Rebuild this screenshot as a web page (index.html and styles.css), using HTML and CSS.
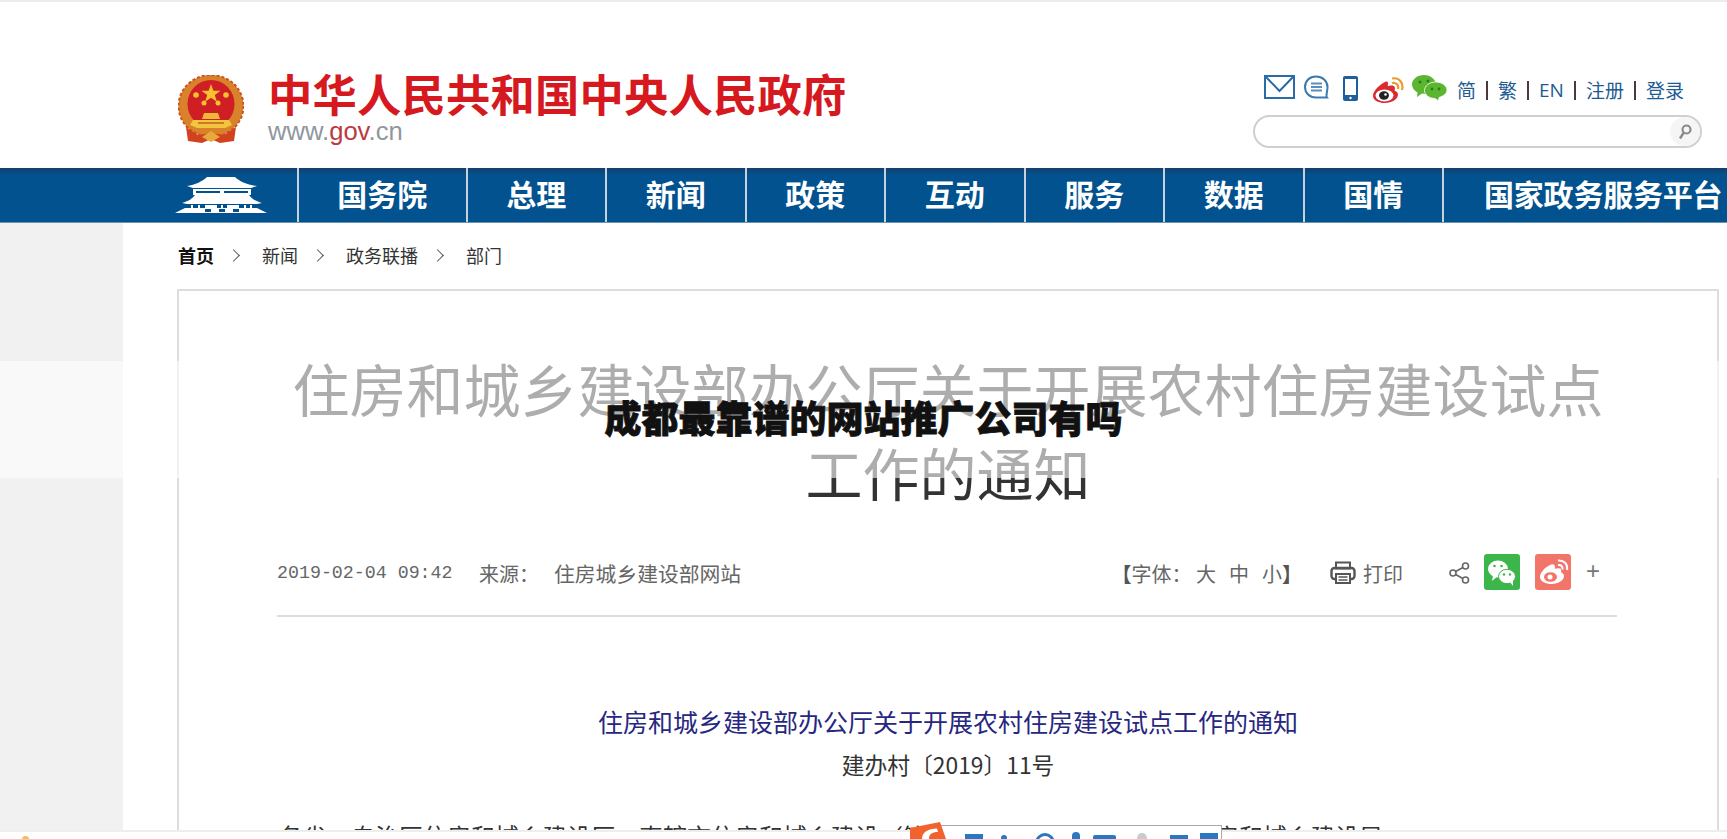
FILE: index.html
```html
<!DOCTYPE html>
<html lang="zh-CN">
<head>
    <meta charset="UTF-8">
    <meta name="viewport" content="width=device-width, initial-scale=1.0">
    <title>成都最靠谱的网站推广公司有吗</title>
    <link rel="stylesheet" href="styles.css">
</head>
<body>
	<div class="page">
		<header class="header">
			<svg class="emblem" viewBox="0 0 66 68">
				<ellipse cx="33" cy="31" rx="32.500" ry="31" fill="#d9822b"/>
				<ellipse cx="33" cy="31" rx="32.500" ry="31" fill="none" stroke="#c9541f" stroke-width="2" stroke-dasharray="3 2"/>
				<path d="M8 52 L20 60 L33 58 L46 60 L58 52 L56 66 L42 68 L33 64 L24 68 L10 66 Z" fill="#d2421f"/>
				<path d="M24 62 L33 56 L42 62 L33 67 Z" fill="#e9a93a"/>
				<ellipse cx="33" cy="29" rx="23.500" ry="24" fill="#cf1f25"/>
				<path d="M33 9 L35.400 15.800 L42.500 15.800 L36.800 20 L38.900 26.800 L33 22.700 L27.100 26.800 L29.200 20 L23.500 15.800 L30.600 15.800 Z" fill="#f5c12f"/>
				<circle cx="18" cy="20" r="2.800" fill="#f5c12f"/>
				<circle cx="48" cy="20" r="2.800" fill="#f5c12f"/>
				<circle cx="26" cy="28" r="2.500" fill="#f5c12f"/>
				<circle cx="40" cy="28" r="2.500" fill="#f5c12f"/>
				<path d="M26 38 H40 L42 44 H24 Z" fill="#eeb83a"/>
				<path d="M15 45 H51 L54 50 L47 53 H19 L12 50 Z" fill="#f2c53f"/>
				<rect x="20" y="47" width="26" height="2" fill="#cf7a23"/>
			</svg>
			<div class="brand">
				<div class="brand-name">中华人民共和国中央人民政府</div>
				<div class="brand-url">www.<span class="brand-url-red">gov</span>.cn</div>
			</div>
			<div class="tools">
				<div class="tool-row">
					<svg class="ico-mail" viewBox="0 0 31 24">
						<rect x="1" y="1" width="29" height="22" fill="none" stroke="#2a6da6" stroke-width="2"/>
						<path d="M2 2 L15.500 16 L29 2" fill="none" stroke="#2a6da6" stroke-width="2"/>
					</svg>
					<svg class="ico-chat" viewBox="0 0 25 24">
						<path d="M12 1.500 C5.500 1.500 1 6 1 12 C1 18 5.500 22.500 12 22.500 H23 C21.500 20.500 23.500 17 23.500 12 C23.500 6 18.500 1.500 12 1.500 Z" fill="none" stroke="#3a7bb0" stroke-width="2"/>
						<path d="M7 8.500 H18 M7 12 H18 M7 15.500 H18" stroke="#5a8fbb" stroke-width="1.800"/>
					</svg>
					<svg class="ico-phone" viewBox="0 0 15 25">
						<rect x="0" y="0" width="15" height="25" rx="2" fill="#1f5f9b"/>
						<rect x="2" y="3" width="11" height="16" fill="#fff"/>
						<circle cx="7.500" cy="22" r="1.200" fill="#fff"/>
					</svg>
					<svg class="ico-weibo" viewBox="0 0 32 26">
						<path d="M13 5 C7 8 1 14 1 19 C1 23.500 7 26 13 26 C20 26 26 22 26 17.500 C26 14.500 23 14 22.500 13.500 C24 10 22 7.500 17 9 C16 9.300 15.500 9 16 7 C16 4.500 15 4 13 5 Z" fill="#dc2a2f"/>
						<ellipse cx="12.500" cy="18.500" rx="9" ry="6" fill="#fff"/>
						<ellipse cx="12" cy="18.500" rx="5" ry="4.200" fill="#222"/>
						<circle cx="13.500" cy="17.500" r="1.300" fill="#fff"/>
						<path d="M20 6 C24 5 27 8 26 12 M20 1.500 C27 0 32 6 30 13" fill="none" stroke="#ee9a2e" stroke-width="2.200"/>
					</svg>
					<svg class="ico-wechat" viewBox="0 0 35 26">
						<path d="M12 0 C5.500 0 0 4.200 0 9.500 C0 13 2.500 15.800 5.500 17.500 L5 22 L10 18.500 C11 18.700 13 19 14 19 L24 8 C22.500 3.500 17.500 0 12 0 Z" fill="#5cb531"/>
						<path d="M23.500 7 C17.500 7 12.500 10.800 12.500 15.500 C12.500 20 17.500 23.500 23 23.500 L26.500 26 L27 22.500 C31.500 21 35 18.500 35 15 C35 10.500 29.500 7 23.500 7 Z" fill="#5cb531" stroke="#fff" stroke-width=".8"/>
						<circle cx="8" cy="7" r="1.500" fill="#2e7d14"/>
						<circle cx="16" cy="6" r="1.500" fill="#2e7d14"/>
						<circle cx="20" cy="14" r="1.400" fill="#2e7d14"/>
						<circle cx="27" cy="14" r="1.400" fill="#2e7d14"/>
					</svg>
					<div class="lang">
						<a>简</a><i></i><a>繁</a><i></i><a class="lang-en">EN</a><i></i><a>注册</a><i></i><a>登录</a>
					</div>
				</div>
				<div class="search">
					<div class="search-btn">
						<svg viewBox="0 0 14 16" class="ico-search">
							<circle cx="8.500" cy="5.500" r="4" fill="none" stroke="#8a8a8a" stroke-width="2.200"/>
							<path d="M5.500 9 L2 14.500" stroke="#8a8a8a" stroke-width="2.400"/>
						</svg>
					</div>
				</div>
			</div>
		</header>

		<nav class="nav">
			<div class="nav-home">
				<svg class="temple" viewBox="0 0 92 36">
					<path d="M12 9 C20 8 28 4 32 0 H60 C64 4 72 8 82 9 L76 11 H18 Z" fill="#fff"/>
					<path d="M18 12 H76 V18 H18 Z M21 14 V16 H45 V14 Z M49 14 V16 H73 V14 Z" fill="#fff" fill-rule="evenodd"/>
					<path d="M7 26 C14 24 18 21 20 18 H74 C76 21 80 24 87 26 L82 27 H12 Z" fill="#fff"/>
					<path d="M16 28 H18 V31 H16 Z M23 28 H25 V31 H23 Z M30 28 H42 V31 H30 Z M46 28 H48 V31 H46 Z M52 28 H64 V31 H52 Z M69 28 H71 V31 H69 Z M75 28 H77 V31 H75 Z" fill="#fff"/>
					<path d="M10 31 H82 L92 36 H0 Z" fill="#fff"/>
					<path d="M30 32 H36 V35 H30 Z M44 32 H50 V35 H44 Z M58 32 H64 V35 H58 Z" fill="#02528f"/>
				</svg>
			</div>
			<a class="nav-item nav-item-wide">国务院</a>
			<a class="nav-item">总理</a>
			<a class="nav-item">新闻</a>
			<a class="nav-item">政策</a>
			<a class="nav-item">互动</a>
			<a class="nav-item">服务</a>
			<a class="nav-item">数据</a>
			<a class="nav-item">国情</a>
			<a class="nav-item nav-item-last">国家政务服务平台</a>
		</nav>

		<div class="main">
			<div class="side-strip"></div>
			<div class="content">
				<div class="crumbs">
					<a class="crumb-home">首页</a>
					<span class="crumb-sep"></span>
					<a>新闻</a>
					<span class="crumb-sep"></span>
					<a>政务联播</a>
					<span class="crumb-sep"></span>
					<a>部门</a>
				</div>
				<article class="card">
					<h1 class="big-title">住房和城乡建设部办公厅关于开展农村住房建设试点<br>工作的通知</h1>
					<div class="meta">
						<span class="meta-date">2019-02-04 09:42</span>
						<span class="meta-from">来源：</span>
						<span class="meta-source">住房城乡建设部网站</span>
						<div class="meta-right">
							<span class="meta-font"><b>【</b>字体： 大<span class="meta-size">中</span><span class="meta-size">小</span><b>】</b></span>
							<svg class="ico-print" viewBox="0 0 26 24">
								<rect x="6" y="1.500" width="14" height="6" fill="none" stroke="#555" stroke-width="2"/>
								<rect x="1.500" y="7" width="23" height="11" rx="3" fill="none" stroke="#555" stroke-width="2.400"/>
								<rect x="6" y="13" width="14" height="9" fill="#fff" stroke="#555" stroke-width="2"/>
								<path d="M8.500 16 H17.500 M8.500 19 H17.500" stroke="#555" stroke-width="1.500"/>
							</svg>
							<span class="meta-print">打印</span>
							<svg class="ico-share" viewBox="0 0 21 22">
								<circle cx="4" cy="11" r="3" fill="none" stroke="#666" stroke-width="1.600"/>
								<circle cx="16.500" cy="4" r="3" fill="none" stroke="#666" stroke-width="1.600"/>
								<circle cx="16.500" cy="18" r="3" fill="none" stroke="#666" stroke-width="1.600"/>
								<path d="M6.600 9.500 L13.900 5.500 M6.600 12.500 L13.900 16.500" stroke="#666" stroke-width="1.600"/>
							</svg>
							<div class="share-box share-wechat">
								<svg viewBox="0 0 36 36">
									<ellipse cx="14" cy="15" rx="10" ry="8.500" fill="#fff"/>
									<path d="M9 21 L8 27 L14 22 Z" fill="#fff"/>
									<ellipse cx="23" cy="22.500" rx="8.500" ry="7.200" fill="#fff" stroke="#3cb54a" stroke-width="1"/>
									<path d="M26 28 L29 32 L29 26 Z" fill="#fff"/>
									<circle cx="10.500" cy="12" r="1.300" fill="#3cb54a"/>
									<circle cx="17.500" cy="12" r="1.300" fill="#3cb54a"/>
									<circle cx="20" cy="20.500" r="1.200" fill="#3cb54a"/>
									<circle cx="26" cy="20.500" r="1.200" fill="#3cb54a"/>
								</svg>
							</div>
							<div class="share-box share-weibo">
								<svg viewBox="0 0 36 36">
									<path d="M15 11 C9 14 5 19 5 23 C5 27.500 11 30 16.500 30 C23.500 30 29 26 29 22 C29 19.500 27 19 26 18 C27 15 25.500 13.500 21.500 14.500 C20 15 19.500 14.500 20 13 C20 10.500 18 9.500 15 11 Z" fill="#fff"/>
									<ellipse cx="15.500" cy="23" rx="6.500" ry="4.800" fill="#f2756a"/>
									<circle cx="15" cy="23" r="2.500" fill="#fff"/>
									<path d="M23 11 C26 10.500 28 12.500 27.500 15.500 M23 6.500 C29 6 33 10 32 16" fill="none" stroke="#fff" stroke-width="2"/>
								</svg>
							</div>
							<span class="meta-plus">+</span>
						</div>
					</div>
					<h2 class="doc-title">住房和城乡建设部办公厅关于开展农村住房建设试点工作的通知</h2>
					<p class="doc-no">建办村〔2019〕11号</p>
					<p class="doc-text">各省、自治区住房和城乡建设厅，直辖市住房和城乡建设（管）委，新疆生产建设兵团住房和城乡建设局：</p>
				</article>
			</div>
		</div>
		<div class="bottom-bar"></div>

		<!-- pale band with the black headline, sits over the article -->
		<div class="veil">
			<div class="veil-title">成都最靠谱的网站推广公司有吗</div>
		</div>

		<!-- input method toolbar, cut off by the window -->
		<div class="ime">
			<svg class="ime-logo" viewBox="0 0 38 17">
				<path d="M0 6 L30 0 L36 17 H0 Z" fill="#f2622c"/>
				<path d="M12 17 C12 10 18 7 27 6.500 L28 10 C22 10 19 12 19 17 Z" fill="#fff"/>
			</svg>
			<div class="ime-icons">
				<span class="ime-zh"></span>
				<span class="ime-dot"></span>
				<span class="ime-ring"></span>
				<span class="ime-mic"></span>
				<span class="ime-key"></span>
				<span class="ime-gray"></span>
				<span class="ime-blue"></span>
				<span class="ime-grid"></span>
			</div>
		</div>
		<div class="star"></div>
	</div>
</body>
</html>
```

FILE: styles.css
```css
* { box-sizing: border-box; }

body { margin: 0; background: #fff; font-family: "Noto Sans CJK SC", "Liberation Sans", sans-serif; color: #333; }

.page { position: relative; height: 839px; overflow: hidden; }

/* header */
.header { display: flex; height: 168px; padding: 75px 25px 0 178px; border-top: 2px solid #ececec; }
.emblem { width: 66px; height: 68px; margin-top: -2px; flex: none; }
.brand { margin-left: 24px; margin-top: -10px; }
.brand-name { font-size: 44.300px; line-height: 52px; font-weight: 700; letter-spacing: .2px; color: #d5191f; white-space: nowrap; }
.brand-url { font-family: "Liberation Sans", sans-serif; font-size: 25.600px; line-height: 30px; color: #8f979d; margin-top: -3px; }
.brand-url-red { color: #bb3a42; }

.tools { margin-left: auto; width: 449px; margin-top: -2px; }
.tool-row { display: flex; align-items: flex-start; height: 40px; padding-left: 11px; }
.ico-mail { width: 31px; height: 24px; flex: none; }
.ico-chat { width: 25px; height: 24px; margin-left: 9px; flex: none; }
.ico-phone { width: 15px; height: 25px; margin-left: 14px; margin-top: 1px; flex: none; }
.ico-weibo { width: 32px; height: 26px; margin-left: 14px; margin-top: 2px; flex: none; }
.ico-wechat { width: 35px; height: 26px; margin-left: 8px; flex: none; }
.lang { display: flex; align-items: center; margin-left: 10px; margin-top: 2px; font-size: 19px; line-height: 26px; color: #1d5b92; white-space: nowrap; }
.lang i { width: 2px; height: 19px; margin: 0 10px; background: #4a3a3a; }
.lang-en { font-family: "Open Sans", sans-serif; }

.search { position: relative; height: 33px; border: 2px solid #cfcfcf; border-radius: 17px; display: flex; justify-content: flex-end; }
.search-btn { width: 30px; height: 29px; border-radius: 50%; background: #f5f5f5; display: flex; align-items: center; justify-content: center; }
.ico-search { width: 14px; height: 16px; }

/* nav */
.nav { display: flex; height: 55px; background: linear-gradient(#143e6b, #02528f 7px); border-bottom: 1px solid #6d93b4; }
.nav-home { width: 297px; padding: 9px 0 0 175px; flex: none; }
.temple { width: 92px; height: 36px; display: block; }
.nav-item { flex: 0 0 139.500px; border-left: 2px solid #c5d2de; color: #fff; font-size: 30px; line-height: 50px; font-weight: 700; text-align: center; }
.nav-item-wide { flex-basis: 168.500px; }
.nav-item-last { flex: 1; text-align: left; padding-left: 40px; white-space: nowrap; letter-spacing: -.2px; }

/* main area */
.main { display: flex; height: 607px; overflow: hidden; }
.side-strip { width: 123px; background: #f1f1f1; flex: none; }
.content { padding-left: 54px; width: 1596px; }

.crumbs { display: flex; align-items: center; height: 64px; margin-bottom: 2px; padding-left: 1px; font-size: 18px; color: #333; }
.crumb-home { font-weight: 700; color: #111; }
.crumb-sep { width: 9px; height: 9px; margin: 0 24px 0 15px; border-top: 1px solid #555; border-right: 1px solid #555; transform: rotate(45deg); }

.card { width: 1542px; padding-top: 54px; border: 2px solid #ddd; border-bottom: none; height: 700px; }
.big-title { margin: 0; font-size: 57px; line-height: 84px; font-weight: 400; text-align: center; color: #333; white-space: nowrap; }

.meta { display: flex; align-items: center; margin: 40px 100px 0 98px; padding-bottom: 22px; padding-right: 17px; border-bottom: 2px solid #ddd; box-sizing: content-box; height: 40px; font-size: 20px; color: #666; white-space: nowrap; }
.meta-date { font-family: "Liberation Mono", monospace; font-size: 18.300px; width: 202px; }
.meta-from { width: 75px; }
.meta-source { font-size: 20.800px; }
.meta-right { display: flex; align-items: center; margin-left: auto; }
.meta-font b { color: #555; }
.meta-size { margin-left: 13px; }
.ico-print { width: 26px; height: 24px; margin-left: 28px; flex: none; }
.meta-print { margin-left: 7px; }
.ico-share { width: 21px; height: 22px; margin-left: 46px; flex: none; }
.share-box { width: 36px; height: 36px; border-radius: 3px; margin-top: -2px; }
.share-box svg { display: block; width: 36px; height: 36px; }
.share-wechat { margin-left: 14px; background: #3cb54a; }
.share-weibo { margin-left: 15px; background: #f2756a; }
.meta-plus { margin-left: 15px; margin-top: -5px; font-family: "Liberation Sans", sans-serif; font-size: 24px; line-height: 30px; color: #777; }

.doc-title { margin: 84px 0 0; font-size: 25px; line-height: 40px; font-weight: 400; text-align: center; color: #27277f; white-space: nowrap; }
.doc-no { margin: 4px 0 0; font-size: 22.800px; line-height: 40px; text-align: center; color: #333; }
.doc-text { margin: 31px 0 0; padding-left: 100px; font-size: 24px; line-height: 40px; color: #333; white-space: nowrap; }

.bottom-bar { height: 9px; background: #fff; border-top: 2px solid #eee; }

/* overlays */
.veil { position: absolute; left: 0; right: 0; top: 361px; height: 117px; background: rgba(255, 255, 255, .6); }
.veil-title { padding-top: 31px; font-size: 37px; line-height: 50px; font-weight: 900; text-align: center; color: #111; -webkit-text-stroke: .8px #111; white-space: nowrap; }

.ime { position: absolute; left: 910px; top: 822px; width: 312px; height: 17px; }
.ime-logo { position: absolute; left: 0; top: 0; width: 38px; height: 17px; z-index: 1; }
.ime-icons { position: absolute; left: 15px; right: 0; top: 3px; height: 14px; background: #fff; border-top: 1px solid #aaa; border-right: 1px solid #aaa; }
.ime-icons span { position: absolute; }
.ime-zh { left: 40px; top: 8px; width: 18px; height: 5px; background: #2a78c2; }
.ime-dot { left: 76px; top: 9px; width: 6px; height: 6px; border-radius: 50%; background: #2a78c2; }
.ime-ring { left: 110px; top: 7px; width: 20px; height: 20px; border: 3px solid #2a78c2; border-radius: 50%; }
.ime-mic { left: 147px; top: 6px; width: 8px; height: 14px; border-radius: 4px; background: #2a78c2; }
.ime-key { left: 168px; top: 9px; width: 23px; height: 8px; background: #2a78c2; border-radius: 2px; }
.ime-gray { left: 212px; top: 7px; width: 10px; height: 10px; border-radius: 50%; background: #c8ccd0; }
.ime-blue { left: 245px; top: 9px; width: 18px; height: 8px; background: #2a78c2; }
.ime-grid { left: 275px; top: 7px; width: 18px; height: 10px; background: #2a78c2; }

.star { position: absolute; left: 22px; top: 836px; width: 7px; height: 7px; border-radius: 50%; background: #f4c04a; }
```
